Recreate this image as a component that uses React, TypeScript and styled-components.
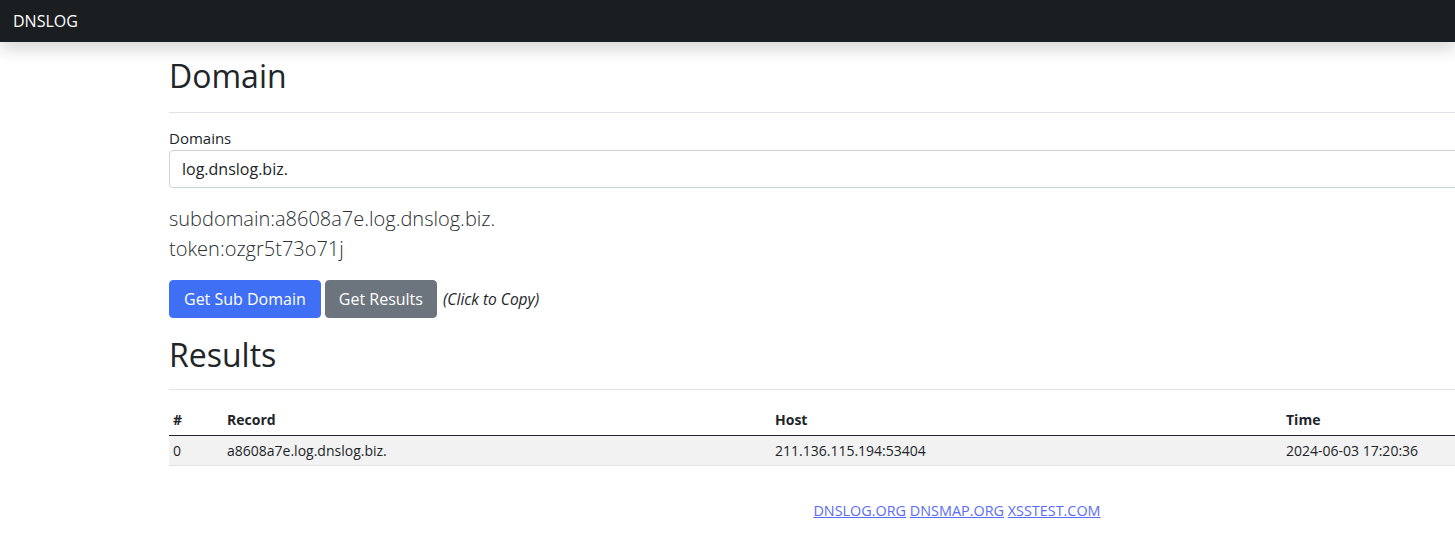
import React from "react";
import styled, { createGlobalStyle } from "styled-components";

const GlobalStyle = createGlobalStyle`
  html, body {
    margin: 0;
    padding: 0;
    overflow: hidden;
    background: #ffffff;
  }
  body {
    font-family: "Open Sans", "Noto Sans", "Liberation Sans", sans-serif;
    font-size: 16px;
    line-height: 1.5;
    color: #212529;
  }
  * { box-sizing: border-box; }
`;

const Navbar = styled.nav`
  height: 42px;
  background: #1b1e21;
  display: flex;
  align-items: center;
  padding: 0 13px;
  box-shadow: 0 8px 16px rgba(0, 0, 0, 0.15);
  position: relative;
  z-index: 1;
`;

const Brand = styled.a`
  color: #ffffff;
  font-size: 16px;
  text-decoration: none;
`;

const Container = styled.main`
  width: 1576px;
  margin-left: 169px;
  padding-top: 15px;
`;

const Heading = styled.h2<{ $gap: number }>`
  font-size: 32px;
  font-weight: 400;
  line-height: 1.2;
  margin: 0 0 ${(p) => p.$gap}px;
`;

const Rule = styled.hr<{ $after: number }>`
  border: 0;
  border-top: 1px solid #dee2e6;
  margin: 0 0 ${(p) => p.$after}px;
`;

const Label = styled.label`
  display: block;
  font-size: 15px;
  line-height: 24px;
`;

const Input = styled.input`
  display: block;
  width: 100%;
  height: 38px;
  padding: 6px 12px;
  font-family: inherit;
  font-size: 16px;
  color: #212529;
  border: 1px solid #ced4da;
  border-radius: 4px;
  background: #fff;
  outline: none;
`;

const Lead = styled.p`
  margin: 16px 0 16px;
  font-size: 20px;
  font-weight: 300;
  line-height: 30px;
  color: #2b2f33;
`;

const Actions = styled.div`
  display: flex;
  align-items: center;
  gap: 4px;
  margin-bottom: 18px;
`;

const Button = styled.button<{ $variant: "primary" | "secondary" }>`
  height: 38px;
  padding: 6px 13px;
  font-family: inherit;
  font-size: 16px;
  line-height: 24px;
  color: #fff;
  border: 1px solid ${(p) => (p.$variant === "primary" ? "#3f6ff5" : "#6c757d")};
  background: ${(p) => (p.$variant === "primary" ? "#3f6ff5" : "#6c757d")};
  border-radius: 4px;
  cursor: pointer;
`;

const PrimaryButton = styled(Button)`
  padding: 6px 14px;
`;

const Hint = styled.em`
  font-size: 15.5px;
  margin-left: 2px;
`;

const Table = styled.table`
  width: 100%;
  border-collapse: collapse;
  font-size: 14px;
  line-height: 21px;
  margin-bottom: 34px;
`;

const Th = styled.th<{ $w: number }>`
  width: ${(p) => p.$w}px;
  text-align: left;
  font-weight: 700;
  padding: 3px 4px 5px;
  border-bottom: 1px solid #212529;
`;

const Row = styled.tr`
  background: #f2f2f2;
`;

const Td = styled.td`
  padding: 4px;
  border-bottom: 1px solid #dee2e6;
`;

const Footer = styled.footer`
  text-align: center;
  font-size: 14.4px;
  line-height: 21px;
`;

const FooterLink = styled.a`
  color: #5b6cf6;
  text-decoration: underline;
`;

const links = ["DNSLOG.ORG", "DNSMAP.ORG", "XSSTEST.COM"];

export default function App() {
  return (
    <>
      <GlobalStyle />
      <Navbar>
        <Brand href="#">DNSLOG</Brand>
      </Navbar>
      <Container>
        <Heading $gap={17}>Domain</Heading>
        <Rule $after={13} />
        <Label htmlFor="domains">Domains</Label>
        <Input id="domains" readOnly value="log.dnslog.biz." />
        <Lead>
          subdomain:a8608a7e.log.dnslog.biz.
          <br />
          token:ozgr5t73o71j
        </Lead>
        <Actions>
          <PrimaryButton $variant="primary">Get Sub Domain</PrimaryButton>
          <Button $variant="secondary">Get Results</Button>
          <Hint>(Click to Copy)</Hint>
        </Actions>
        <Heading $gap={14}>Results</Heading>
        <Rule $after={16} />
        <Table>
          <thead>
            <tr>
              <Th $w={54}>#</Th>
              <Th $w={548}>Record</Th>
              <Th $w={511}>Host</Th>
              <Th $w={463}>Time</Th>
            </tr>
          </thead>
          <tbody>
            <Row>
              <Td>0</Td>
              <Td>a8608a7e.log.dnslog.biz.</Td>
              <Td>211.136.115.194:53404</Td>
              <Td>2024-06-03 17:20:36</Td>
            </Row>
          </tbody>
        </Table>
        <Footer>
          {links.map((l, i) => (
            <React.Fragment key={l}>
              {i > 0 && " "}
              <FooterLink href="#">{l}</FooterLink>
            </React.Fragment>
          ))}
        </Footer>
      </Container>
    </>
  );
}
